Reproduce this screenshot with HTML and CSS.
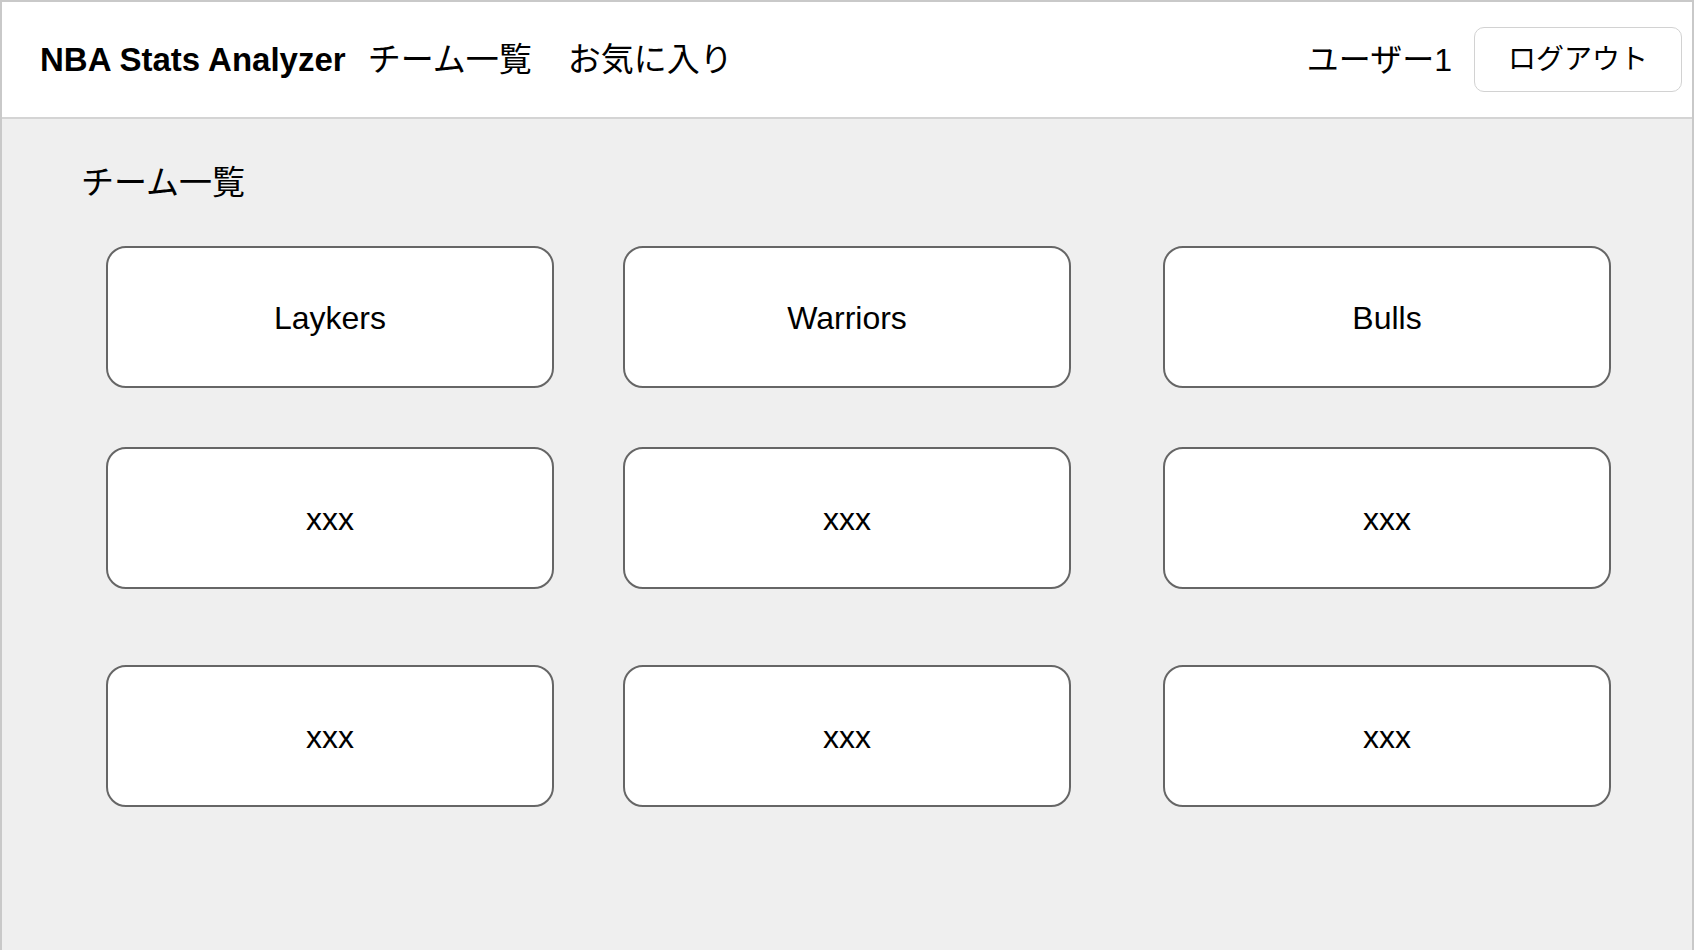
FILE: index.html
```html
<!DOCTYPE html>
<html lang="ja">
<head>
<meta charset="utf-8">
<title>NBA Stats Analyzer</title>
<link rel="stylesheet" href="styles.css">
</head>
<body>
<div class="frame">
  <header class="header">
    <div class="brand">NBA Stats Analyzer</div>
    <nav class="nav">
      <a class="nav-item">チーム一覧</a>
      <a class="nav-item">お気に入り</a>
    </nav>
    <div class="user">
      <span class="user-name">ユーザー1</span>
      <button class="logout">ログアウト</button>
    </div>
  </header>
  <main class="main">
    <h1 class="page-title">チーム一覧</h1>
    <div class="grid">
      <div class="card">Laykers</div>
      <div class="card">Warriors</div>
      <div class="card">Bulls</div>
      <div class="card">xxx</div>
      <div class="card">xxx</div>
      <div class="card">xxx</div>
      <div class="card">xxx</div>
      <div class="card">xxx</div>
      <div class="card">xxx</div>
    </div>
  </main>
</div>
</body>
</html>
```
FILE: styles.css
```css
html, body {
  margin: 0;
  padding: 0;
  background: #ffffff;
}
body {
  font-family: "Liberation Sans", "Noto Sans CJK JP", sans-serif;
  color: #000;
  width: 1698px;
  height: 950px;
  overflow: hidden;
}
.frame {
  box-sizing: border-box;
  width: 1694px;
  height: 950px;
  border: 2px solid #c9c9c9;
  border-bottom: none;
  display: flex;
  flex-direction: column;
}
.header {
  box-sizing: border-box;
  height: 117px;
  flex: none;
  background: #fff;
  border-bottom: 2px solid #d4d4d4;
  display: flex;
  align-items: center;
  padding: 0 10px 0 38px;
}
.brand {
  font-size: 33px;
  font-weight: bold;
  line-height: 1;
}
.nav {
  display: flex;
  gap: 36px;
  margin-left: 22px;
}
.nav-item {
  font-size: 33px;
  line-height: 1;
  color: #000;
}
.user {
  margin-left: auto;
  display: flex;
  align-items: center;
  gap: 22px;
}
.user-name {
  font-size: 32px;
  line-height: 1;
}
.logout {
  box-sizing: border-box;
  width: 208px;
  height: 65px;
  background: #fff;
  border: 1.5px solid #d2d2d2;
  border-radius: 10px;
  font-family: "Liberation Sans", "Noto Sans CJK JP", sans-serif;
  font-size: 28px;
  color: #000;
  padding: 0 0 5px;
  margin-top: 0;
}
.main {
  flex: 1;
  background: #efefef;
  padding: 47px 0 0 79px;
}
.page-title {
  margin: 0;
  font-size: 33px;
  font-weight: normal;
  line-height: 33px;
}
.grid {
  margin: 47px 0 0 25px;
  display: grid;
  grid-template-columns: 448px 448px 471px;
  grid-template-rows: 142px 142px 159px;
  column-gap: 69px;
  row-gap: 59px;
}
.card {
  box-sizing: border-box;
  width: 448px;
  height: 142px;
  background: #fff;
  border: 2px solid #666;
  border-radius: 20px;
  display: flex;
  align-items: center;
  justify-content: center;
  padding-top: 3px;
  font-size: 32px;
}
.card:nth-child(3n) {
  justify-self: end;
}
.card:nth-child(n+7) {
  align-self: end;
}
```
